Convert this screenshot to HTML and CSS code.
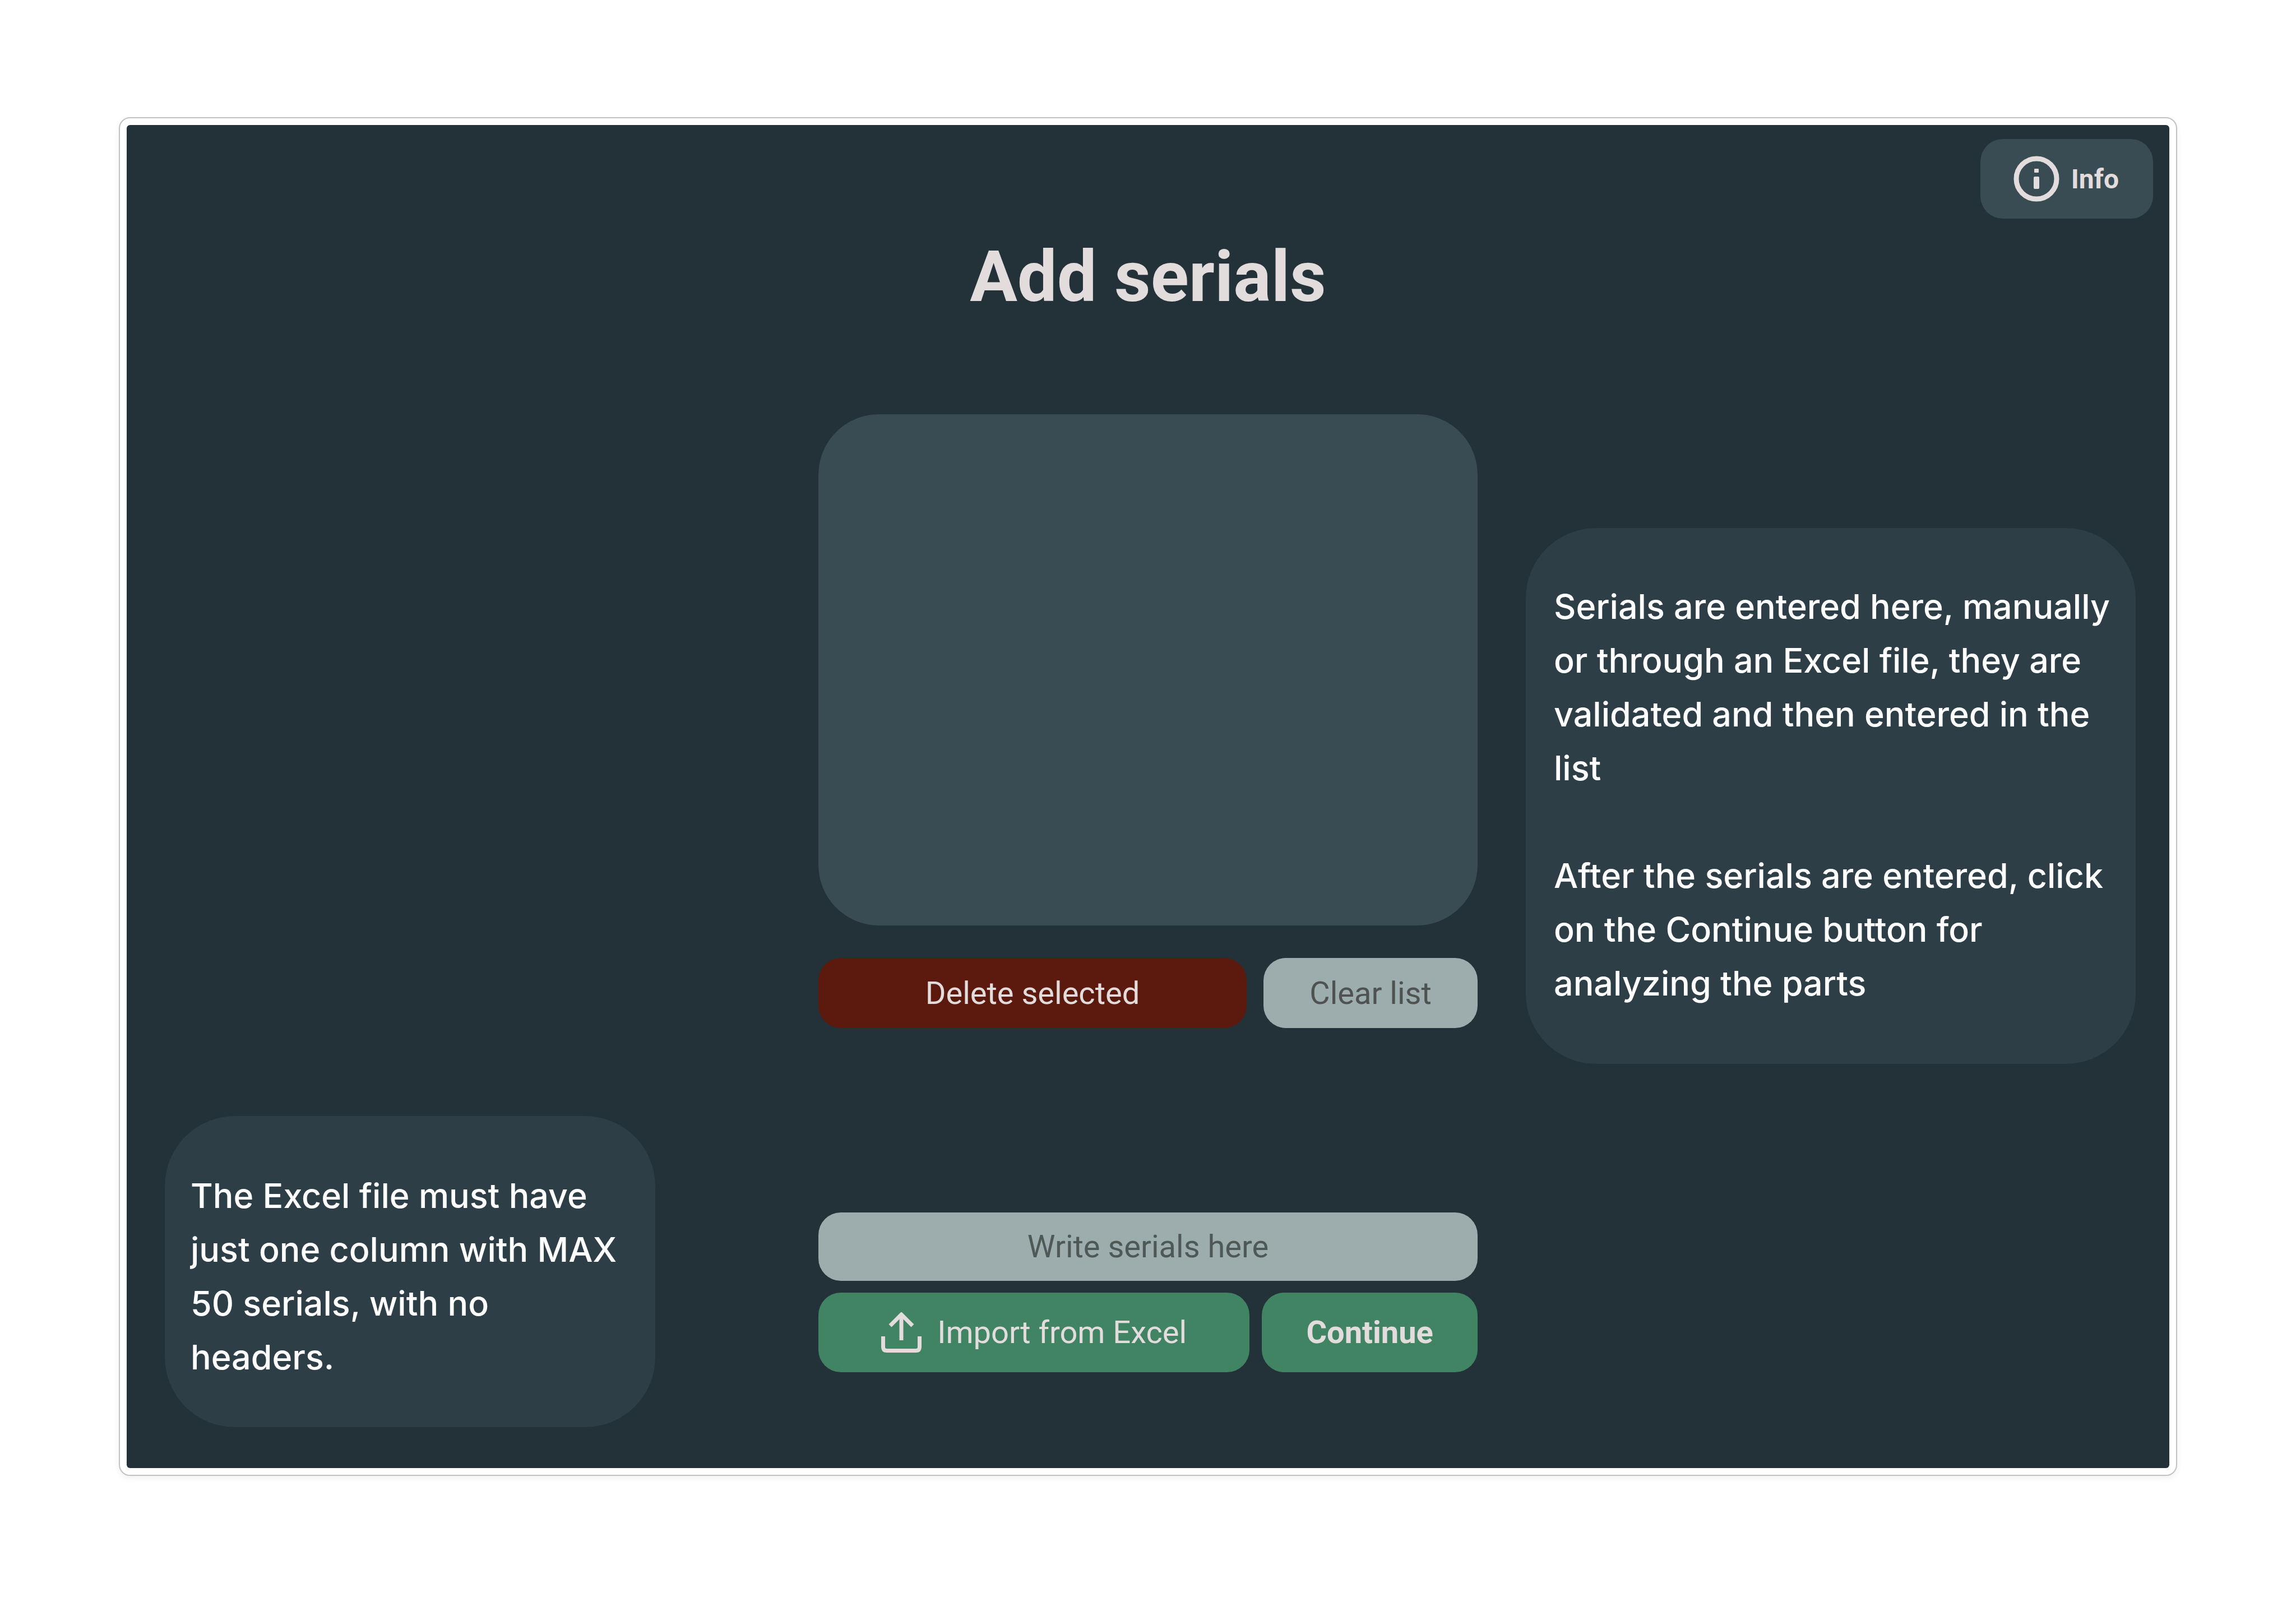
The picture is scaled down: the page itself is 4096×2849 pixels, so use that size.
FILE: index.html
```html
<!DOCTYPE html>
<html lang="en">
<head>
<meta charset="utf-8">
<title>Add serials</title>
<link rel="stylesheet" href="styles.css">
</head>
<body>
<div class="frame">
  <main class="screen">
    <header class="topbar">
      <button class="btn btn-info" type="button">
        <svg class="icon-info" viewBox="0 0 84 84" aria-hidden="true">
          <circle cx="42" cy="42" r="36" fill="none" stroke="currentColor" stroke-width="9"/>
          <rect x="38" y="24" width="8" height="7" rx="1" fill="currentColor"/>
          <rect x="37" y="38" width="10" height="22" rx="2" fill="currentColor"/>
        </svg>
        Info
      </button>
    </header>
    <h1 class="title">Add serials</h1>
    <div class="columns">
      <aside class="note note-file">
        <p>The Excel file must have just one column with MAX 50 serials, with no headers.</p>
      </aside>
      <form class="serials">
        <select class="list" multiple aria-label="Serials"></select>
        <div class="row list-actions">
          <button class="btn btn-delete" type="button">Delete selected</button>
          <button class="btn btn-clear" type="button">Clear list</button>
        </div>
        <input class="entry" type="text" placeholder="Write serials here" aria-label="Write serials here">
        <div class="row main-actions">
          <button class="btn btn-import" type="button">
            <svg class="icon-upload" viewBox="0 0 72 72" fill="none" stroke="currentColor" stroke-width="7" aria-hidden="true">
              <path d="M36 50V2M16 24L36 4l20 20M3.500 43v19q0 6.500 6.500 6.500h52q6.500 0 6.500-6.500V43"/>
            </svg>
            Import from Excel
          </button>
          <button class="btn btn-continue" type="button">Continue</button>
        </div>
      </form>
      <aside class="note note-help">
        <p>Serials are entered here, manually or through an Excel file, they are validated and then entered in the list</p>
        <p>After the serials are entered, click on the Continue button for analyzing the parts</p>
      </aside>
    </div>
  </main>
</div>
</body>
</html>
```
FILE: styles.css
```css
* {
  box-sizing: border-box;
}

body {
  display: flex;
  min-height: 100vh;
  margin: 0;
  padding: 209px 212px 216px;
  background: #ffffff;
  font-family: Roboto, "Liberation Sans", sans-serif;
}

.frame {
  display: flex;
  flex: 1;
  padding: 12px;
  border: 2px solid #c2c2c2;
  border-radius: 20px;
  background: #ffffff;
  box-shadow: 0 4px 12px rgba(0, 0, 0, 0.06);
}

.screen {
  display: flex;
  flex: 1;
  flex-direction: column;
  border-radius: 6px;
  background: #233138;
  color: #e2dcdd;
}

.topbar {
  display: flex;
  justify-content: flex-end;
  padding: 25px 29px 0;
}

.title {
  margin: 30px 0 171px;
  font-size: 126px;
  font-weight: 700;
  line-height: 148px;
  text-align: center;
}

.columns {
  display: grid;
  flex: 1;
  grid-template-columns: 1fr minmax(0, 1176px) 1fr;
}

.serials {
  display: flex;
  flex-direction: column;
  padding-bottom: 171px;
}

.list {
  height: 912px;
  margin: 0;
  border: 0;
  border-radius: 108px;
  background: #394c53;
  appearance: none;
  overflow: hidden;
}

.row {
  display: grid;
}

.list-actions {
  grid-template-columns: 2fr 1fr;
  gap: 30px;
  margin: 58px 0 auto;
}

.main-actions {
  grid-template-columns: 2fr 1fr;
  gap: 22px;
  margin-top: 21px;
}

.btn,
.entry {
  display: flex;
  align-items: center;
  justify-content: center;
  margin: 0;
  padding: 0;
  border: 0;
  border-radius: 40px;
  color: #e2dcdd;
  font-family: inherit;
  font-size: 56px;
  font-weight: 400;
}

.btn-info {
  gap: 20px;
  height: 142px;
  padding: 0 61px 0 58px;
  background: #394c53;
  font-size: 48px;
  font-weight: 700;
}

.icon-info {
  width: 84px;
  height: 84px;
}

.btn-delete,
.btn-clear {
  height: 125px;
}

.btn-delete {
  background: #5b1a0d;
}

.btn-clear {
  background: #9dadad;
  color: #4e5352;
}

.entry {
  height: 122px;
  background: #9dadad;
  color: #4e5857;
  text-align: center;
}

.entry::placeholder {
  color: #4e5857;
  opacity: 1;
}

.btn-import,
.btn-continue {
  height: 142px;
  background: #408464;
}

.btn-import {
  gap: 28px;
}

.icon-upload {
  width: 72px;
  height: 72px;
}

.btn-continue {
  font-weight: 700;
}

.note {
  border-radius: 125px;
  background: #2e3e46;
  color: #ffffff;
  font-family: Inter, "Liberation Sans", sans-serif;
  font-size: 61px;
  font-weight: 500;
  line-height: 96px;
}

.note p {
  margin: 0;
}

.note p + p {
  margin-top: 96px;
}

.note-file {
  align-self: end;
  margin: 0 291px 73px 68px;
  padding: 94px 48px 77px 46px;
}

.note-help {
  align-self: start;
  margin: 203px 60px 0 86px;
  padding: 92px 34px 96px 50px;
}
```
